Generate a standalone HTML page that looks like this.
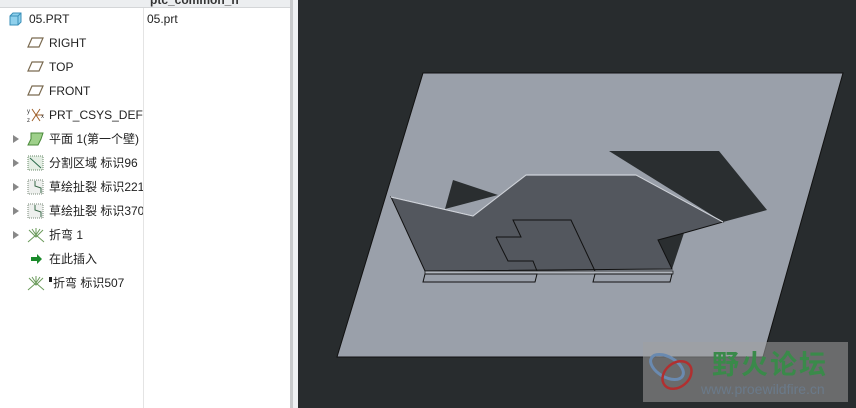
<!DOCTYPE html>
<html><head><style>
body{margin:0;width:856px;height:408px;overflow:hidden;background:#282c2e;font-family:"Liberation Sans","Noto Sans CJK SC",sans-serif;position:relative}
#panel{position:absolute;left:0;top:0;width:290px;height:408px;background:#fff}
#hdr{position:absolute;left:0;top:0;width:290px;height:7px;background:#eceef0;border-bottom:1px solid #d4d6d8}
#hdr span{position:absolute;left:150px;top:-7px;font-size:12px;font-weight:bold;color:#333}
#div{position:absolute;left:143px;top:8px;width:1px;height:400px;background:#e4e4e4}
#b1{position:absolute;left:290px;top:0;width:3px;height:408px;background:#c8cacc}
#b2{position:absolute;left:293px;top:0;width:5px;height:408px;background:#eef0f2}
.r{position:absolute;font-size:12px;color:#222;white-space:nowrap;height:16px;line-height:16px}
.a{position:absolute;left:13px;width:0;height:0;border-left:6px solid #888;border-top:4px solid transparent;border-bottom:4px solid transparent}
.ic{position:absolute;left:27px}
#clip{position:absolute;left:0;top:0;width:143px;height:408px;overflow:hidden}
</style></head><body>
<div id="panel">
<div id="hdr"><span>ptc_common_n</span></div>
<div id="div"></div>
<div class="r" style="left:147px;top:11px">05.prt</div>
<div id="clip">
<svg class="ic" style="left:8px;top:12px" width="14" height="14"><path d="M2 4 L5 1 L13 1 L13 10 L10 13 L2 13Z" fill="#8fd0ec" stroke="#3a8fb8"/><path d="M2 4 L10 4 L13 1 M10 4 L10 13" fill="none" stroke="#3a8fb8"/></svg>
<div class="r" style="left:29px;top:11px">05.PRT</div>
<svg class="ic" style="top:37px" width="18" height="12"><path d="M5 1 L16 1 L12 10 L1 10Z" fill="none" stroke="#7a6a50" stroke-width="1.2"/></svg>
<div class="r" style="left:49px;top:35px">RIGHT</div>
<svg class="ic" style="top:61px" width="18" height="12"><path d="M5 1 L16 1 L12 10 L1 10Z" fill="none" stroke="#7a6a50" stroke-width="1.2"/></svg>
<div class="r" style="left:49px;top:59px">TOP</div>
<svg class="ic" style="top:85px" width="18" height="12"><path d="M5 1 L16 1 L12 10 L1 10Z" fill="none" stroke="#7a6a50" stroke-width="1.2"/></svg>
<div class="r" style="left:49px;top:83px">FRONT</div>
<svg class="ic" style="top:107px" width="18" height="16"><path d="M5 2 L13 14 M13 2 L5 14 M9 8 L16 8" stroke="#a0602a" fill="none"/><text x="0" y="6" font-size="6" fill="#333">y</text><text x="0" y="15" font-size="6" fill="#333">z</text><text x="14" y="11" font-size="6" fill="#333">x</text></svg>
<div class="r" style="left:49px;top:107px">PRT_CSYS_DEF</div>
<div class="a" style="top:135px"></div>
<svg class="ic" style="top:132px" width="18" height="14"><path d="M4 1 L16 1 L14 7 L11 13 L1 13 L4 7Z" fill="#9ed08a" stroke="#4a8a3a"/></svg>
<div class="r" style="left:49px;top:131px">平面 1(第一个壁)</div>
<div class="a" style="top:159px"></div>
<svg class="ic" style="top:155px" width="18" height="16"><rect x="1" y="1" width="15" height="14" fill="#e4eee4" stroke="#6a8a6a" stroke-dasharray="1 1"/><path d="M3 3 L14 13" stroke="#2a6a4a"/></svg>
<div class="r" style="left:49px;top:155px">分割区域 标识96</div>
<div class="a" style="top:183px"></div>
<svg class="ic" style="top:179px" width="18" height="16"><rect x="1" y="1" width="15" height="14" fill="#eef0ee" stroke="#7a8a7a" stroke-dasharray="1 1"/><path d="M8 2 L8 7 L14 9 L14 14" stroke="#3a6a4a" fill="none"/></svg>
<div class="r" style="left:49px;top:179px">草绘扯裂 标识221</div>
<div class="a" style="top:207px"></div>
<svg class="ic" style="top:203px" width="18" height="16"><rect x="1" y="1" width="15" height="14" fill="#eef0ee" stroke="#7a8a7a" stroke-dasharray="1 1"/><path d="M8 2 L8 7 L14 9 L14 14" stroke="#3a6a4a" fill="none"/></svg>
<div class="r" style="left:49px;top:203px">草绘扯裂 标识370</div>
<div class="a" style="top:231px"></div>
<svg class="ic" style="top:227px" width="18" height="16"><path d="M1 15 L9 8 L17 15 M2 3 L9 10 L16 3 M5 2 L9 8 L13 2 M9 1 L9 8" stroke="#6a9a5a" fill="none"/></svg>
<div class="r" style="left:49px;top:227px">折弯 1</div>
<svg class="ic" style="left:31px;top:254px" width="12" height="10"><path d="M0 3 L6 3 L6 0 L11 5 L6 10 L6 7 L0 7Z" fill="#1a8a2a"/></svg>
<div class="r" style="left:49px;top:251px">在此插入</div>
<svg class="ic" style="top:275px" width="18" height="16"><path d="M1 15 L9 8 L17 15 M2 3 L9 10 L16 3 M5 2 L9 8 L13 2 M9 1 L9 8" stroke="#6a9a5a" fill="none"/></svg>
<div style="position:absolute;left:49px;top:277px;width:3px;height:5px;background:#222"></div>
<div class="r" style="left:53px;top:275px">折弯 标识507</div>
</div>
</div>
<div id="b1"></div><div id="b2"></div>
<svg style="position:absolute;left:0;top:0" width="856" height="408">
<polygon points="423,73 843,73 763,357 337,357" fill="#9aa0aa" stroke="#111" stroke-width="1"/>
<polygon points="609,151 719,151 767,210 723,222" fill="#2a2e30"/>
<polygon points="453,180 498,195 445,209" fill="#2a2e30"/>
<polygon points="658,240 684,233 672,269" fill="#2a2e30"/>
<polygon points="391,197 473,216 526,175 636,175 723,222 684,233 658,240 672,269 425,271" fill="#53575e" stroke="#111" stroke-width="1"/>
<polyline points="391,197 473,216 526,175 636,175 723,222" fill="none" stroke="#cfd3da" stroke-width="1.2"/>
<polyline points="496,237 521,237 513,220 571,220 595,271" fill="none" stroke="#111"/>
<polyline points="496,237 508,261 533,261 537,271" fill="none" stroke="#111"/>
<rect x="425" y="271" width="248" height="3" fill="#b0b5bd" stroke="#111" stroke-width="0.7"/>
<polygon points="425,274 537,274 535,282 423,282" fill="#9aa0aa" stroke="#111"/>
<polygon points="595,274 672,274 670,282 593,282" fill="#9aa0aa" stroke="#111"/>
</svg>
<div style="position:absolute;left:643px;top:342px;width:205px;height:60px;background:rgba(160,160,160,.55)"></div>
<svg style="position:absolute;left:645px;top:345px" width="60" height="60"><ellipse cx="22" cy="22" rx="18" ry="10" fill="none" stroke="#6a8ab0" stroke-width="3" transform="rotate(30 22 22)"/><ellipse cx="32" cy="30" rx="16" ry="12" fill="none" stroke="#b03030" stroke-width="2.5" transform="rotate(-40 32 30)"/></svg>
<div style="position:absolute;left:712px;top:343px;font-size:27px;font-weight:bold;color:#3a8a4a;letter-spacing:2px;font-family:'Noto Sans CJK SC',sans-serif">野火论坛</div>
<div style="position:absolute;left:701px;top:381px;font-size:14px;color:#6a7a8a">www.proewildfire.cn</div>
</body></html>
